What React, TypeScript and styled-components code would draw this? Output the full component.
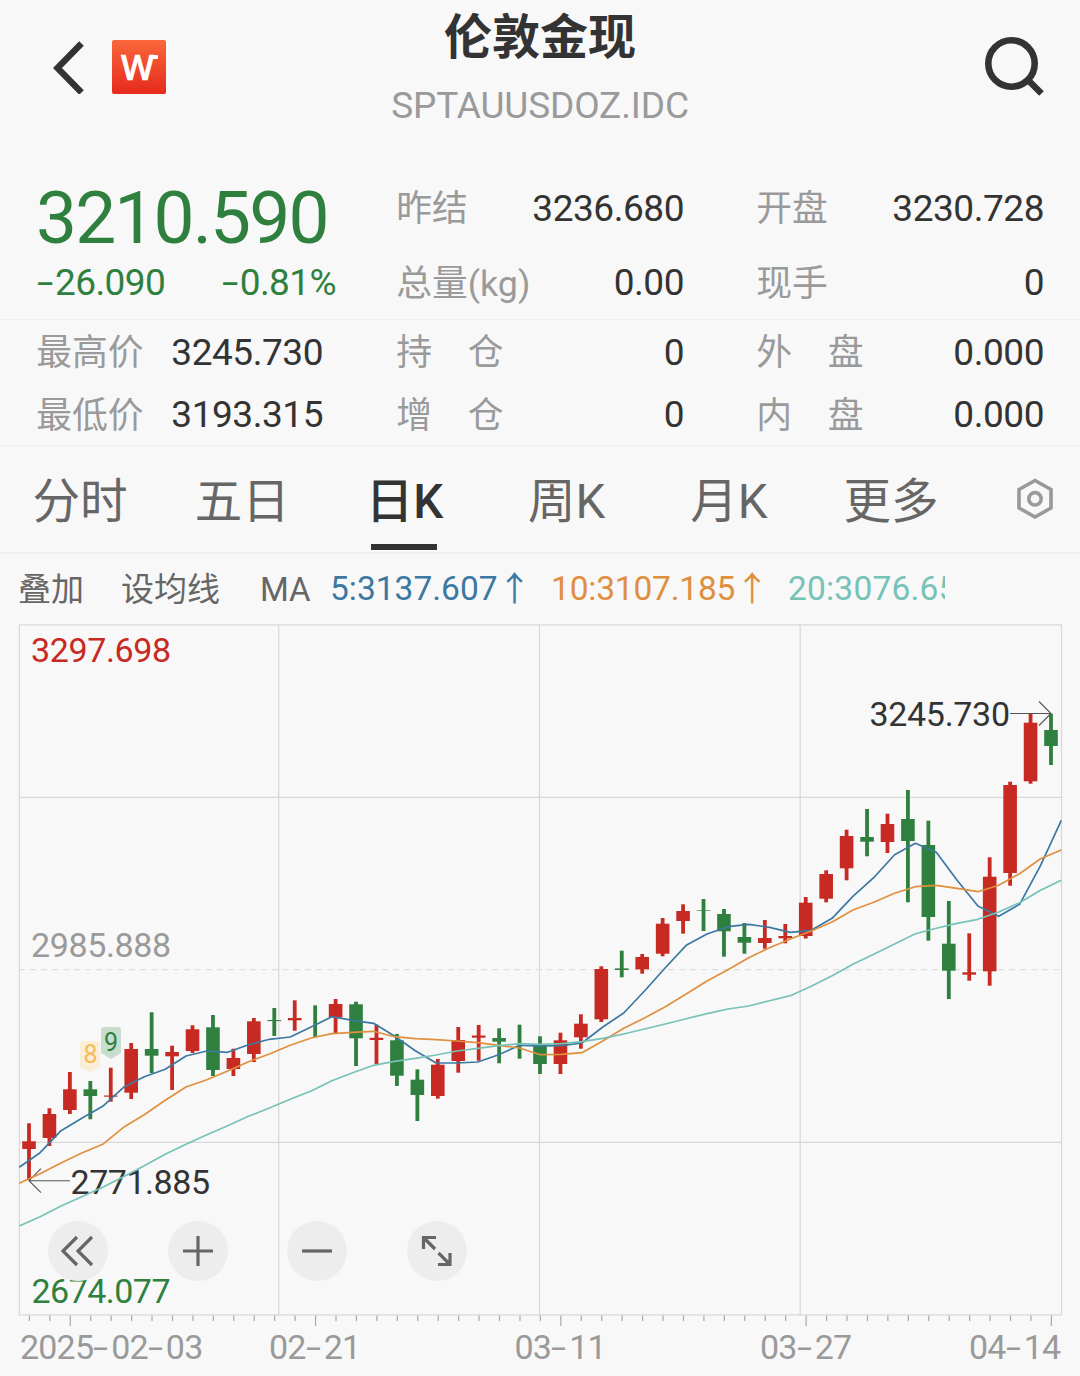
import React from "react";
import styled, { createGlobalStyle, css } from "styled-components";

const C = {
  bg: "#f8f8f8",
  ink: "#333333",
  muted: "#9a9a9a",
  tab: "#666666",
  green: "#2f803e",
  red: "#c62a22",
  blue: "#3c78a2",
  orange: "#e08f3e",
  teal: "#76c2b7",
  grid: "#d8d8d9",
  line: "#efefef",
};

const FONT = `Roboto, "Noto Sans CJK SC", sans-serif`;

const GlobalStyle = createGlobalStyle`
  * { box-sizing: border-box; }
  body { margin: 0; background: ${C.bg}; font-family: ${FONT}; color: ${C.ink}; }
`;

const Page = styled.main`
  width: 1080px;
  height: 1376px;
  overflow: hidden;
  background: ${C.bg};
`;

/* ---------- header ---------- */

const Header = styled.header`
  display: grid;
  grid-template-columns: 300px 1fr 300px;
  height: 170px;
`;

const HeaderLeft = styled.div`
  display: flex;
  align-items: center;
  gap: 26px;
  height: 134px;
  padding-left: 52px;
`;

const HeaderRight = styled.div`
  display: flex;
  justify-content: flex-end;
  align-items: center;
  height: 134px;
  padding-right: 34px;
`;

const Titles = styled.div`
  display: flex;
  flex-direction: column;
  align-items: center;
`;

const Title = styled.h1`
  margin: 0;
  font-size: 48px;
  font-weight: 700;
  line-height: 75px;
`;

const Code = styled.div`
  font-size: 37px;
  line-height: 61px;
  letter-spacing: -0.12px;
  color: ${C.muted};
  white-space: nowrap;
`;

const Logo = styled.div`
  position: relative;
  width: 54px;
  height: 54px;
  border-radius: 2px;
  background: linear-gradient(#f9673b, #e62a1c);
  color: #fff;
  font: 600 35px/54px "Open Sans", sans-serif;
  padding-left: 9px;
  -webkit-text-stroke: 0.6px #fff;

  &::after {
    content: "";
    position: absolute;
    left: 39px;
    top: 14.5px;
    width: 7px;
    height: 4.5px;
    border-radius: 3px 1px 1px 0;
    background: #fff;
  }
`;

/* ---------- quote ---------- */

const Quote = styled.section`
  display: grid;
  grid-template-columns: 360px 287px 287px;
  column-gap: 0;
  padding-left: 37px;
  height: 150px;
  border-bottom: 1px solid ${C.line};
`;

const Detail = styled(Quote)`
  height: 126px;
`;

const Column = styled.div<{ $shift?: number }>`
  display: flex;
  flex-direction: column;
  margin-left: ${(p) => p.$shift ?? 0}px;
  margin-right: ${(p) => -(p.$shift ?? 0)}px;
`;

const Price = styled.div`
  font-size: 73px;
  line-height: 97px;
  letter-spacing: -1.85px;
  margin-left: -1px;
  color: ${C.green};
`;

const Changes = styled.div`
  display: flex;
  justify-content: space-between;
  width: 299px;
  color: ${C.green};
`;

const Change = styled.span`
  font-size: 37px;
  line-height: 32px;
  letter-spacing: -0.6px;
  white-space: nowrap;
`;

const Dash = styled.span`
  display: inline-block;
  width: 18px;
  transform: scaleX(1.6);
  transform-origin: 0 50%;
`;

const Pair = styled.div<{ $h: number; $w?: number }>`
  display: flex;
  justify-content: space-between;
  width: ${(p) => p.$w ?? 287}px;
  height: ${(p) => p.$h}px;
  line-height: ${(p) => p.$h}px;
  white-space: nowrap;
`;

const Label = styled.span`
  padding-top: 2px;
  margin-left: -0.8px;
  font-size: 35.8px;
  color: ${C.muted};
`;

const Value = styled.span`
  padding-top: 0.5px;
  font-size: 37px;
  letter-spacing: -0.45px;
`;

/* ---------- tabs ---------- */

const Tabs = styled.nav`
  display: flex;
  height: 108px;
  margin-left: -1px;
  border-bottom: 2px solid ${C.line};
`;

const Tab = styled.div<{ $active?: boolean }>`
  display: flex;
  flex-direction: column;
  align-items: center;
  justify-content: space-between;
  width: 162.2px;
  padding-bottom: 3px;
  font-size: 47.5px;
  height: 107px;
  color: ${C.tab};
  ${(p) =>
    p.$active &&
    css`
      color: ${C.ink};
      font-weight: 500;
    `}
`;

const TabText = styled.span`
  height: 98px;
  line-height: 112px;
`;

const Underline = styled.span`
  width: 66px;
  height: 6px;
  background: ${C.ink};
`;

const TabIcon = styled.div`
  display: flex;
  align-items: center;
  height: 106px;
  margin-left: 42px;
`;

/* ---------- averages ---------- */

const Averages = styled.div`
  display: flex;
  align-items: center;
  width: 945px;
  height: 70px;
  padding-left: 18px;
  overflow: hidden;
  white-space: nowrap;
  font-size: 33px;
  line-height: 70px;
  color: ${C.tab};
`;

const Tool = styled.span<{ $w: number }>`
  flex: none;
  width: ${(p) => p.$w}px;
  padding-top: 2px;
`;

const Average = styled.span<{ $color: string; $w: number; $track?: number }>`
  display: flex;
  flex: none;
  width: ${(p) => p.$w}px;
  font-size: 33.5px;
  letter-spacing: ${(p) => p.$track ?? 0}px;
  color: ${(p) => p.$color};
`;

const Arrow = styled.span`
  width: 34px;
  font-family: "Noto Sans CJK SC", sans-serif;
  font-size: 34px;
  line-height: 65px;
`;

/* ---------- chart ---------- */

const ChartBox = styled.section`
  position: relative;
  width: 1080px;
  height: 752px;
`;

const ChartSvg = styled.svg`
  display: block;
  font-family: ${FONT};
  font-size: 34px;
`;

const Controls = styled.div`
  position: absolute;
  left: 48px;
  top: 597px;
  display: flex;
  gap: 59.5px;
`;

const RoundButton = styled.button`
  display: flex;
  align-items: center;
  justify-content: center;
  width: 60px;
  height: 60px;
  padding: 0;
  border: 0;
  border-radius: 50%;
  background: #ededed;
`;

const Dates = styled.div`
  display: grid;
  grid-template-columns: 249px 245.5px 245.5px 209px auto;
  padding-left: 20px;
  font-size: 34px;
  line-height: 42px;
  letter-spacing: -0.8px;
  color: ${C.muted};
  white-space: nowrap;
`;

type Candle = [0 | 1, number, number, number, number];

/* [rising, wick top, body top, body bottom, wick bottom] */
const candles: Candle[] = [
  [1, 1123.3, 1141.3, 1149, 1180], [1, 1108.3, 1114, 1138, 1146], [1, 1072, 1089.3, 1110, 1114],
  [0, 1081, 1089.3, 1096, 1119.3], [1, 1067.7, 1095.5, 1096.7, 1101.7], [1, 1043, 1049, 1092.7, 1099],
  [0, 1012.3, 1049, 1055.7, 1073], [1, 1045.7, 1052, 1056.3, 1090], [1, 1025.3, 1029.3, 1051, 1053],
  [0, 1015, 1027.3, 1070, 1076], [1, 1048.7, 1058, 1069, 1076], [1, 1018, 1021.3, 1054, 1062],
  [0, 1008, 1020, 1021.1, 1036], [1, 1000.3, 1018, 1020.3, 1030.7], [0, 1005.3, 1020, 1020, 1037.3],
  [1, 999, 1004, 1017.5, 1033.7], [0, 1001.7, 1004.3, 1038.3, 1066], [1, 1024.7, 1037.8, 1040, 1064],
  [0, 1034, 1040.3, 1075.7, 1086], [0, 1069.3, 1079.7, 1095, 1121], [1, 1059, 1064.7, 1096, 1098.7],
  [1, 1027, 1040, 1061, 1072.7], [1, 1025, 1035.5, 1037.7, 1060.7], [0, 1028.3, 1038, 1041.7, 1063.3],
  [0, 1024.7, 1045, 1045, 1058.7], [0, 1036.3, 1045, 1064, 1074], [1, 1032.7, 1040.3, 1064, 1074],
  [1, 1014.3, 1023.7, 1037.3, 1048.7], [1, 966.3, 969, 1019.3, 1022], [0, 950.7, 968.4, 970, 977.3],
  [1, 954, 957, 969.3, 973.7], [1, 918, 923.7, 953.7, 956.3], [1, 904.3, 911, 921, 933.7],
  [0, 899, 910.4, 911, 931], [0, 909, 914, 931.3, 956.7], [0, 923, 937, 942.7, 953.7],
  [1, 920, 938, 943, 948.7], [1, 924, 936, 938.3, 943.3], [1, 897, 902.7, 936, 938.5],
  [1, 870.3, 874, 898.7, 902.3], [1, 829.7, 836, 868.3, 880.3], [0, 809, 837, 841.7, 856.3],
  [1, 813.7, 824, 842, 853], [0, 790, 819, 841, 902.3], [0, 820.7, 845, 917, 940.7],
  [0, 901, 943.7, 970.7, 999], [1, 933.3, 972.3, 974.7, 980.7], [1, 857.3, 876.7, 971.3, 985.7],
  [1, 781.7, 785, 873, 885.7], [1, 713.7, 722.7, 781.3, 783.7], [0, 713.7, 730, 746, 765],
];

const ma5 = [
  1167.3, 1152.7, 1130.7, 1118.3, 1106.3, 1087.3, 1076.7, 1069.3, 1056, 1051, 1052.3, 1044.7, 1039.3,
  1037, 1027, 1016.7, 1020.3, 1023.3, 1036, 1050.7, 1063, 1063, 1062, 1054.7, 1045.3, 1046, 1045.7,
  1043, 1027, 1013, 991, 967.7, 945.3, 934, 926.7, 924.3, 927.3, 932.3, 930.3, 918.3, 896.3, 877.7,
  854.7, 843.3, 852.3, 880.3, 906, 916.3, 904.3, 865.7, 820.3,
];

const ma10 = [
  1183.3, 1173.7, 1163, 1153, 1144.3, 1127.3, 1114.7, 1100.3, 1087, 1079.7, 1071, 1061.7, 1054, 1045.3,
  1038, 1033.7, 1032.3, 1031.3, 1036.7, 1038.7, 1039.7, 1041, 1042.7, 1045.3, 1048, 1054.7, 1054.3,
  1052.7, 1041, 1028.3, 1018, 1006.7, 994, 981, 969.7, 957.7, 947.7, 939, 931, 922, 910, 902.3, 893.3,
  886.7, 885.3, 888.3, 891.7, 885.3, 873.7, 858.7, 850,
];

const ma20 = [
  1226, 1216.7, 1206, 1196.7, 1187.3, 1176.7, 1165.7, 1154.3, 1144.3, 1134.7, 1125.7, 1116.3, 1108,
  1099.3, 1091, 1080.7, 1072.7, 1065.3, 1061.3, 1058.3, 1055, 1051, 1048.3, 1045.7, 1043.7, 1044.3,
  1043.7, 1041.7, 1038.3, 1034, 1029, 1024, 1018.7, 1013.7, 1009, 1006, 1000.7, 995.7, 986.3, 975.7,
  964.3, 954.3, 944, 933.7, 928.3, 923.3, 919.3, 912, 902.7, 890.3, 880.3,
];

const candleX = (i: number) => 29 + i * 20.44;
const toPoints = (ys: number[]) => ys.map((y, i) => `${(19.3 + i * 20.84).toFixed(1)},${y}`).join(" ");

const dates = ["2025-02-03", "02-21", "03-11", "03-27", "04-14"];

function Chart() {
  return (
    <ChartSvg width="1080" height="702" viewBox="0 624 1080 702">
      <g stroke={C.grid} strokeWidth="1.2" fill="none">
        <rect x="19.4" y="624.9" width="1042.1" height="690" />
        <path d="M278.8 625V1315M539.5 625V1315M800.2 625V1315M19 797.4H1061M19 1142.4H1061" />
        <path d="M19 969.6H1061" stroke="#dedede" strokeDasharray="6 5" />
      </g>

      <g fontSize="34">
        <text x="31" y="661.5" textLength="140" fill={C.red}>3297.698</text>
        <text x="31" y="957" textLength="140" fill={C.muted}>2985.888</text>
        <text x="31.5" y="1303" textLength="139" fill={C.green}>2674.077</text>
      </g>

      {candles.map(([up, high, top, bottom, low], i) => {
        const x = candleX(i);
        const fill = up ? C.red : C.green;
        return (
          <g key={i} fill={fill}>
            <rect x={x - 1.9} y={high} width="3.8" height={low - high} />
            <rect x={x - 6.8} y={top} width="13.6" height={bottom - top} />
          </g>
        );
      })}

      <path d="M80 1044q0-3 3-3h14q3 0 3 3v23l-10 5l-10-5z" fill="#fbeed9" />
      <text x="90.5" y="1063" textAnchor="middle" fontSize="25" fill="#f5bd4f">8</text>
      <path d="M101 1030q0-3 3-3h14q3 0 3 3v23l-10 6l-10-6z" fill="#c7decd" />
      <text x="111" y="1050.5" textAnchor="middle" fontSize="25" fill={C.green}>9</text>

      <g fontSize="34" fill={C.ink}>
        <text x="869.5" y="726" textLength="140.5">3245.730</text>
        <text x="70.5" y="1194" textLength="139.5">2771.885</text>
      </g>
      <path
        d="M1010 713.5H1051M1039 701.5L1051 713.5L1039 725.5M70 1180.7H29M41 1168.7L29 1180.7L41 1192.7"
        stroke="#555"
        strokeWidth="1.1"
        fill="none"
      />

      <g fill="none" strokeWidth="1.7" strokeLinejoin="round">
        <polyline points={toPoints(ma5)} stroke={C.blue} />
        <polyline points={toPoints(ma10)} stroke={C.orange} />
        <polyline points={toPoints(ma20)} stroke={C.teal} />
      </g>

      <g stroke="#a8a8a8" strokeWidth="1.2">
        {candles.map((_, i) => (
          <line key={i} x1={candleX(i) + 0.4} x2={candleX(i) + 0.4} y1="1315.5" y2={i % 12 === 2 ? 1326 : 1321} />
        ))}
      </g>
    </ChartSvg>
  );
}

const Glyph = ({ d }: { d: string }) => (
  <svg width="36" height="36" viewBox="0 0 36 36" fill="none" stroke="#666" strokeWidth="3.2">
    <path d={d} />
  </svg>
);

const controls = [
  "M17 4L3 18L17 32M32 4L18 18L32 32",
  "M3 18H33M18 3V33",
  "M3 18H33",
  "M4.5 16V4.5H17M4.5 4.5L16 16M31 20V31.5H19M31 31.5L19.5 20",
];

const tabs = ["分时", "五日", "日K", "周K", "月K", "更多"];

export default function App() {
  return (
    <Page>
      <GlobalStyle />
      <Header>
        <HeaderLeft>
          <svg width="34" height="54" viewBox="0 0 34 54" fill="none" stroke={C.ink} strokeWidth="6.4">
            <path d="M29.5 3.5L5.5 28L29.5 52.5" />
          </svg>
          <Logo>W</Logo>
        </HeaderLeft>
        <Titles>
          <Title>伦敦金现</Title>
          <Code>SPTAUUSDOZ.IDC</Code>
        </Titles>
        <HeaderRight>
          <svg width="62" height="62" viewBox="0 0 62 62" fill="none" stroke={C.ink} strokeWidth="6.6">
            <circle cx="27.5" cy="27.5" r="23.2" />
            <path d="M43.5 43.5L57.5 57.5" />
          </svg>
        </HeaderRight>
      </Header>

      <Quote>
        <Column>
          <Price>3210.590</Price>
          <Changes>
            <Change><Dash>-</Dash>26.090</Change>
            <Change><Dash>-</Dash>0.81%</Change>
          </Changes>
        </Column>
        <Column>
          <Pair $h={75}><Label>昨结</Label><Value>3236.680</Value></Pair>
          <Pair $h={74}><Label>总量(kg)</Label><Value>0.00</Value></Pair>
        </Column>
        <Column $shift={73}>
          <Pair $h={75}><Label>开盘</Label><Value>3230.728</Value></Pair>
          <Pair $h={74}><Label>现手</Label><Value>0</Value></Pair>
        </Column>
      </Quote>

      <Detail>
        <Column>
          <Pair $h={63} $w={286}><Label>最高价</Label><Value>3245.730</Value></Pair>
          <Pair $h={62} $w={286}><Label>最低价</Label><Value>3193.315</Value></Pair>
        </Column>
        <Column>
          <Pair $h={63}><Label>持　仓</Label><Value>0</Value></Pair>
          <Pair $h={62}><Label>增　仓</Label><Value>0</Value></Pair>
        </Column>
        <Column $shift={73}>
          <Pair $h={63}><Label>外　盘</Label><Value>0.000</Value></Pair>
          <Pair $h={62}><Label>内　盘</Label><Value>0.000</Value></Pair>
        </Column>
      </Detail>

      <Tabs>
        {tabs.map((t) => (
          <Tab key={t} $active={t === "日K"}>
            <TabText>{t}</TabText>
            {t === "日K" && <Underline />}
          </Tab>
        ))}
        <TabIcon>
          <svg width="40" height="44" viewBox="0 0 40 44" fill="none" stroke="#999" strokeWidth="3.6">
            <path d="M21 3.5L37 12.5V31L21 40L5 31V12.5Z" />
            <circle cx="21" cy="21.8" r="6.2" />
          </svg>
        </TabIcon>
      </Tabs>

      <Averages>
        <Tool $w={103}>叠加</Tool>
        <Tool $w={139}>设均线</Tool>
        <Tool $w={70}>MA</Tool>
        <Average $color={C.blue} $w={221}>5:3137.607<Arrow>↑</Arrow></Average>
        <Average $color={C.orange} $w={237} $track={-0.2}>10:3107.185<Arrow>↑</Arrow></Average>
        <Average $color={C.teal} $w={221} $track={0.2}>20:3076.65</Average>
      </Averages>

      <ChartBox>
        <Chart />
        <Dates>
          {dates.map((date) => (
            <span key={date}>
              {date.split("-").map((part, i) => (
                <React.Fragment key={i}>
                  {i > 0 && <Dash>-</Dash>}
                  {part}
                </React.Fragment>
              ))}
            </span>
          ))}
        </Dates>
        <Controls>
          {controls.map((d) => (
            <RoundButton key={d}><Glyph d={d} /></RoundButton>
          ))}
        </Controls>
      </ChartBox>
    </Page>
  );
}
